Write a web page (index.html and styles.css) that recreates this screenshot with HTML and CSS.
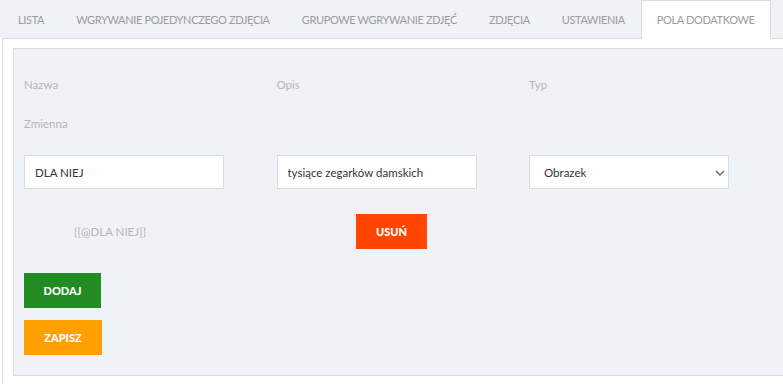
FILE: index.html
```html
<!DOCTYPE html>
<html lang="pl">
<head>
<meta charset="utf-8">
<link rel="stylesheet" href="styles.css">
</head>
<body>
<nav class="tabs">
  <a class="tab">LISTA</a>
  <a class="tab">WGRYWANIE POJEDYNCZEGO ZDJĘCIA</a>
  <a class="tab">GRUPOWE WGRYWANIE ZDJĘĆ</a>
  <a class="tab">ZDJĘCIA</a>
  <a class="tab">USTAWIENIA</a>
  <a class="tab active">POLA DODATKOWE</a>
</nav>
<div class="outer">
  <div class="inner">
    <div class="row labels">
      <div class="col label">Nazwa</div>
      <div class="col label">Opis</div>
      <div class="col label">Typ</div>
    </div>
    <div class="row var-label">
      <div class="col label">Zmienna</div>
    </div>
    <div class="row fields">
      <div class="col"><input class="input" type="text" value="DLA NIEJ"></div>
      <div class="col"><input class="input" type="text" value="tysiące zegarków damskich"></div>
      <div class="col select-wrap">
        <select class="input select"><option>Obrazek</option></select>
        <svg class="chev" width="10" height="6" viewBox="0 0 10 6"><path d="M1 1 L5 5 L9 1" fill="none" stroke="#666" stroke-width="1.4"/></svg>
      </div>
    </div>
    <div class="row var-row">
      <div class="col var-cell"><span class="var">{[@DLA NIEJ]}</span></div>
      <div class="col del-cell"><button class="btn del">USUŃ</button></div>
    </div>
    <div class="actions">
      <button class="btn add">DODAJ</button>
      <button class="btn save">ZAPISZ</button>
    </div>
  </div>
</div>
</body>
</html>
```
FILE: styles.css
```css
html, body {
  margin: 0;
  padding: 0;
  background: #ffffff;
  overflow: hidden;
  font-family: "Lato", "Noto Sans", sans-serif;
}
body {
  width: 783px;
  height: 384px;
}
.tabs {
  display: flex;
  height: 38px;
  background: #eff3f7;
  padding-left: 2px;
  align-items: stretch;
}
.tab {
  display: flex;
  align-items: center;
  padding: 0 15px 1px;
  border: 1px solid transparent;
  border-bottom: none;
  font-size: 11px;
  letter-spacing: -0.35px;
  color: #9b9b9b;
  white-space: nowrap;
}
.tab.active {
  background: #ffffff;
  border-color: #dcdcdc;
  height: 39px;
  box-sizing: border-box;
  position: relative;
  z-index: 1;
}
.outer {
  margin-left: 2px;
  border-top: 1px solid #dcdcdc;
  border-left: 1px solid #dcdcdc;
  background: #ffffff;
  padding: 9px 0 7px 10px;
  height: 400px;
}
.inner {
  width: 900px;
  border: 1px solid #dcdcdc;
  background: #eff3f7;
  padding: 26px 10px 20px;
}
.row {
  display: flex;
}
.col {
  width: 252.5px;
  flex: none;
  position: relative;
}
.label {
  font-size: 11.5px;
  color: #b5b5b5;
  line-height: 20px;
  height: 20px;
}
.var-label {
  margin-top: 19px;
}
.fields {
  margin-top: 21px;
}
.input {
  display: block;
  box-sizing: border-box;
  width: 200px;
  height: 34px;
  border: 1px solid #dcdcdc;
  background: #ffffff;
  padding: 0 10px;
  font-family: "Lato", "Noto Sans", sans-serif;
  font-size: 11.5px;
  color: #333333;
  outline: none;
  border-radius: 0;
  margin: 0;
}
.select {
  appearance: none;
  -webkit-appearance: none;
  padding-left: 14px;
}
.chev {
  position: absolute;
  left: 186px;
  top: 15px;
}
.var-row {
  margin-top: 25px;
  height: 35px;
}
.var-cell {
  display: flex;
  align-items: center;
  padding-left: 50px;
  box-sizing: border-box;
}
.var {
  font-size: 11.5px;
  color: #b5b5b5;
}
.del-cell {
  padding-left: 79.5px;
  box-sizing: border-box;
}
.btn {
  display: block;
  border: none;
  color: #ffffff;
  font-family: "Lato", "Noto Sans", sans-serif;
  font-weight: 900;
  font-size: 11px;
  height: 35px;
  padding: 0;
  cursor: pointer;
  border-radius: 0;
  margin: 0;
}
.del {
  background: #ff4500;
  width: 71px;
}
.actions {
  display: flex;
  flex-direction: column;
  align-items: flex-start;
  gap: 12px;
  margin-top: 24px;
}
.add {
  background: #228b22;
  width: 77px;
}
.save {
  background: #ffa000;
  width: 78px;
}
```
